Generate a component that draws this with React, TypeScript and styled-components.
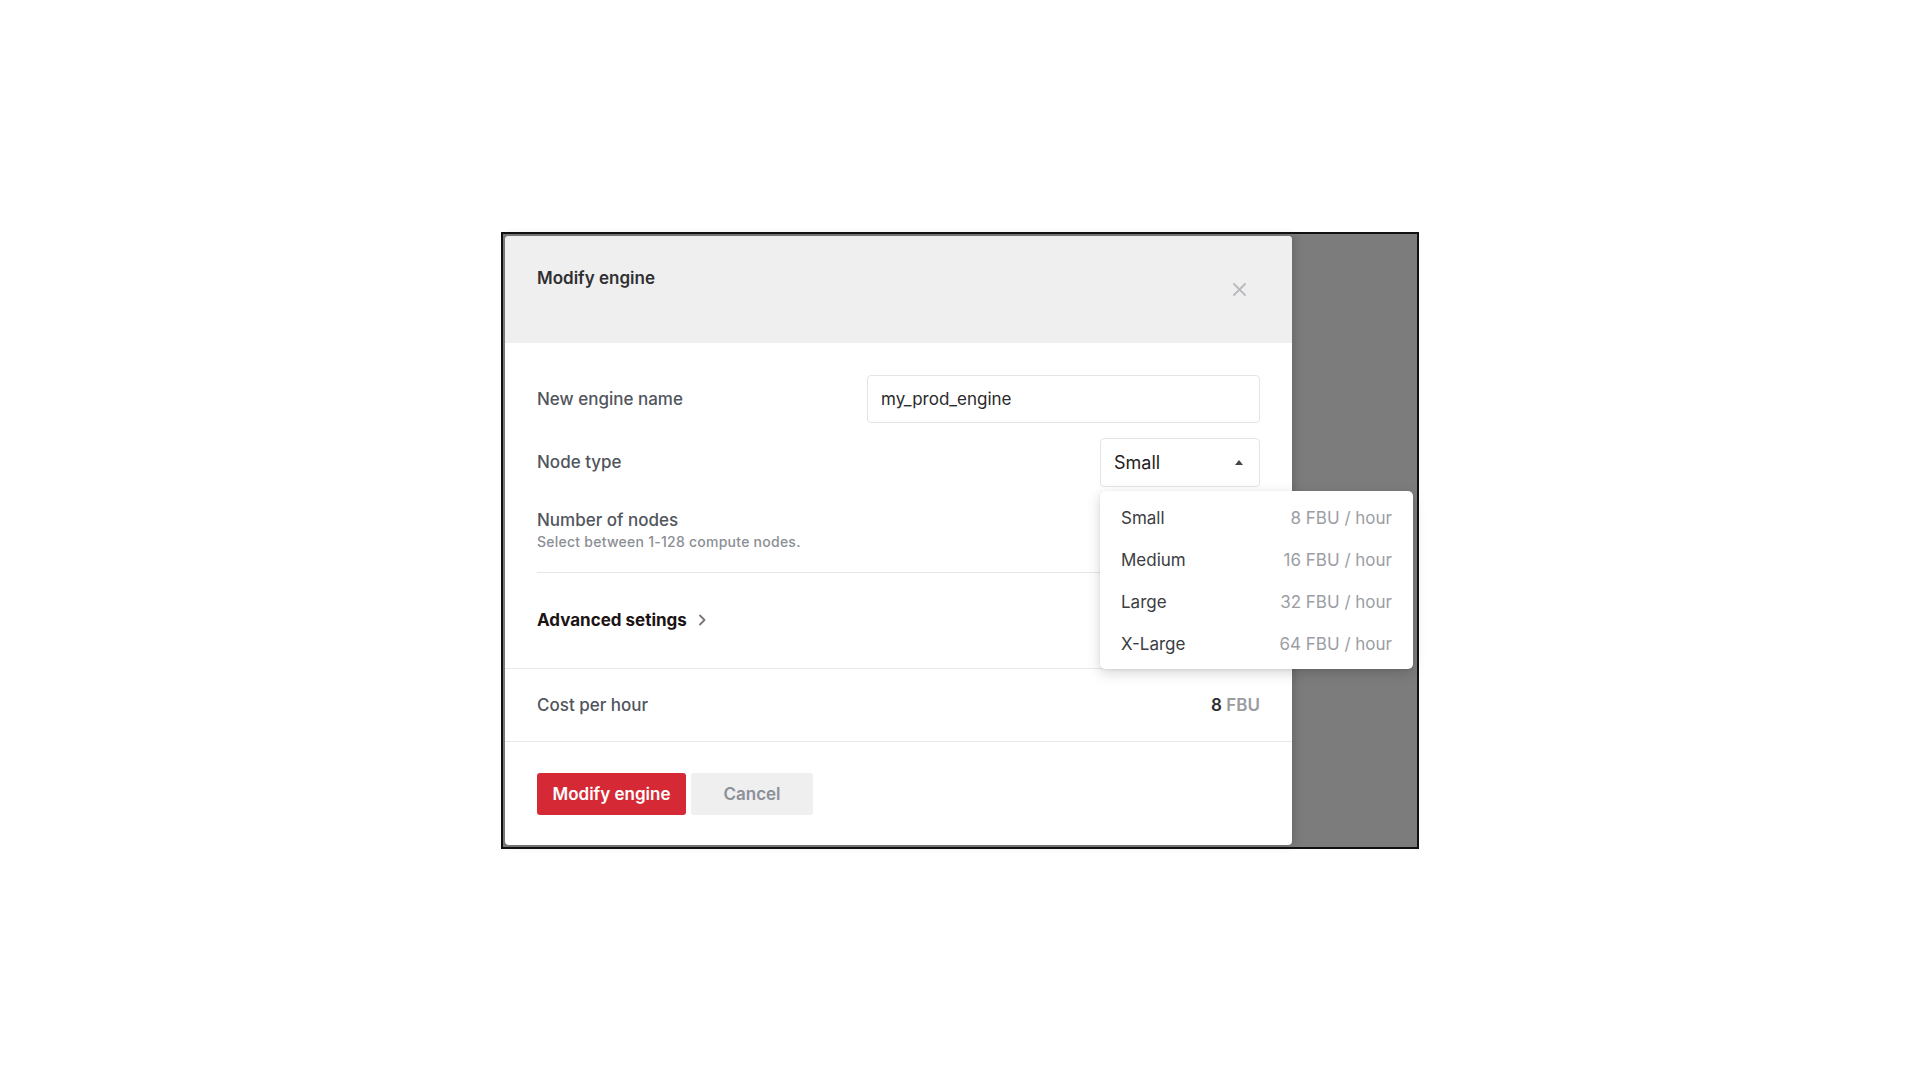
import React from "react";
import styled, { createGlobalStyle } from "styled-components";

const Global = createGlobalStyle`
  html, body { margin: 0; padding: 0; background: #ffffff; }
  body { font-family: Inter, "Noto Sans", "Liberation Sans", sans-serif; -webkit-font-smoothing: antialiased; }
  * { box-sizing: border-box; }
`;

const Page = styled.div`
  width: 1920px;
  height: 1080px;
  display: flex;
  align-items: center;
  justify-content: center;
`;

const Frame = styled.div`
  width: 918px;
  height: 617px;
  border: 2px solid #111111;
  background: #7c7c7c;
  padding: 2px;
  display: flex;
`;

const Modal = styled.div`
  width: 787px;
  height: 609px;
  background: #ffffff;
  border-radius: 4px;
  position: relative;
  display: flex;
  flex-direction: column;
  box-shadow: 2px 0 10px rgba(0, 0, 0, 0.18);
`;

const Header = styled.div`
  height: 107px;
  background: #efefef;
  border-radius: 4px 4px 0 0;
  padding: 32px 41px 0 32px;
  display: flex;
  justify-content: space-between;
  align-items: flex-start;
`;

const Title = styled.h2`
  margin: 0;
  font-size: 17px;
  line-height: 20px;
  font-weight: 600;
  color: #2f3033;
`;

const CloseButton = styled.button`
  margin-top: 10px;
  width: 24px;
  height: 24px;
  padding: 0;
  border: none;
  background: transparent;
  display: flex;
  align-items: center;
  justify-content: center;
  color: #b9babd;
`;

const Body = styled.div`
  padding: 32px 32px 0;
  display: flex;
  flex-direction: column;
`;

const FieldRow = styled.div<{ $mt?: number }>`
  display: flex;
  justify-content: space-between;
  align-items: center;
  margin-top: ${(p) => p.$mt ?? 0}px;
`;

const Label = styled.label`
  font-size: 17px;
  line-height: 20px;
  font-weight: 500;
  color: #51555d;
`;

const TextInput = styled.input`
  width: 393px;
  height: 48px;
  border: 1px solid #e4e4e6;
  border-radius: 4px;
  padding: 0 13px;
  font-family: inherit;
  font-size: 17px;
  color: #2a2a2c;
  outline: none;
  background: #fff;
`;

const SelectWrap = styled.div`
  position: relative;
`;

const SelectBox = styled.div`
  width: 160px;
  height: 49px;
  border: 1px solid #e4e4e6;
  border-radius: 4px;
  padding: 0 16px 0 13px;
  display: flex;
  align-items: center;
  justify-content: space-between;
  font-size: 18px;
  color: #231d1e;
  background: #fff;
`;

const Menu = styled.ul`
  position: absolute;
  top: 53px;
  left: 0;
  width: 313px;
  margin: 0;
  padding: 6px 0 4px;
  list-style: none;
  background: #fff;
  border-radius: 5px;
  box-shadow: 0 4px 14px rgba(0, 0, 0, 0.16), 0 1px 3px rgba(0, 0, 0, 0.08);
  z-index: 10;
`;

const MenuItem = styled.li`
  height: 42px;
  padding: 0 21px;
  display: flex;
  align-items: center;
  justify-content: space-between;
  font-size: 17px;
`;

const ItemName = styled.span`
  color: #3b3d42;
`;

const ItemPrice = styled.span`
  color: #9b9ea4;
`;

const NodesBlock = styled.div`
  margin-top: 23px;
  display: flex;
  flex-direction: column;
  gap: 3px;
  padding-bottom: 21px;
  border-bottom: 1px solid #e6e6e8;
`;

const Hint = styled.span`
  font-size: 14px;
  line-height: 18px;
  font-weight: 500;
  letter-spacing: 0.25px;
  color: #8b8e94;
`;

const AdvancedLink = styled.button`
  margin: 37px 0 38px;
  padding: 0;
  border: none;
  background: none;
  display: flex;
  align-items: center;
  gap: 11px;
  font-family: inherit;
  font-size: 17px;
  line-height: 20px;
  font-weight: 700;
  color: #1c1314;
  align-self: flex-start;
`;

const CostRow = styled.div`
  height: 74px;
  border-top: 1px solid #e8e8ea;
  border-bottom: 1px solid #e8e8ea;
  padding: 0 32px;
  display: flex;
  align-items: center;
  justify-content: space-between;
`;

const Cost = styled.span`
  font-size: 17px;
  font-weight: 600;
  color: #2d2e31;
`;

const CostUnit = styled.span`
  color: #9a9ca2;
`;

const Footer = styled.div`
  padding: 31px 32px 0;
  display: flex;
  gap: 5px;
`;

const Button = styled.button<{ $primary?: boolean }>`
  height: 42px;
  padding: 0 ${(p) => (p.$primary ? 14 : 24)}px;
  min-width: ${(p) => (p.$primary ? 149 : 122)}px;
  border: none;
  border-radius: 3px;
  font-family: inherit;
  font-size: 17px;
  font-weight: 600;
  background: ${(p) => (p.$primary ? "#d52a35" : "#efeff0")};
  color: ${(p) => (p.$primary ? "#ffffff" : "#8c9099")};
`;

const options = [
  { name: "Small", price: "8 FBU / hour" },
  { name: "Medium", price: "16 FBU / hour" },
  { name: "Large", price: "32 FBU / hour" },
  { name: "X-Large", price: "64 FBU / hour" },
];

export default function App() {
  return (
    <>
      <Global />
      <Page>
        <Frame>
          <Modal>
            <Header>
              <Title>Modify engine</Title>
              <CloseButton aria-label="Close">
                <svg width="13" height="13" viewBox="0 0 13 13">
                  <path d="M1 1L12 12M12 1L1 12" stroke="currentColor" strokeWidth="1.8" strokeLinecap="round" />
                </svg>
              </CloseButton>
            </Header>
            <Body>
              <FieldRow>
                <Label>New engine name</Label>
                <TextInput defaultValue="my_prod_engine" />
              </FieldRow>
              <FieldRow $mt={15}>
                <Label>Node type</Label>
                <SelectWrap>
                  <SelectBox>
                    <span>Small</span>
                    <svg width="8" height="5" viewBox="0 0 8 5">
                      <path d="M0 5L4 0L8 5Z" fill="#4a4446" />
                    </svg>
                  </SelectBox>
                  <Menu>
                    {options.map((o) => (
                      <MenuItem key={o.name}>
                        <ItemName>{o.name}</ItemName>
                        <ItemPrice>{o.price}</ItemPrice>
                      </MenuItem>
                    ))}
                  </Menu>
                </SelectWrap>
              </FieldRow>
              <NodesBlock>
                <Label>Number of nodes</Label>
                <Hint>Select between 1-128 compute nodes.</Hint>
              </NodesBlock>
              <AdvancedLink>
                Advanced setings
                <svg width="8" height="12" viewBox="0 0 8 12">
                  <path d="M2 1.5L6.5 6L2 10.5" stroke="#7a7476" strokeWidth="1.8" fill="none" strokeLinecap="round" strokeLinejoin="round" />
                </svg>
              </AdvancedLink>
            </Body>
            <CostRow>
              <Label>Cost per hour</Label>
              <Cost>
                8 <CostUnit>FBU</CostUnit>
              </Cost>
            </CostRow>
            <Footer>
              <Button $primary>Modify engine</Button>
              <Button>Cancel</Button>
            </Footer>
          </Modal>
        </Frame>
      </Page>
    </>
  );
}
